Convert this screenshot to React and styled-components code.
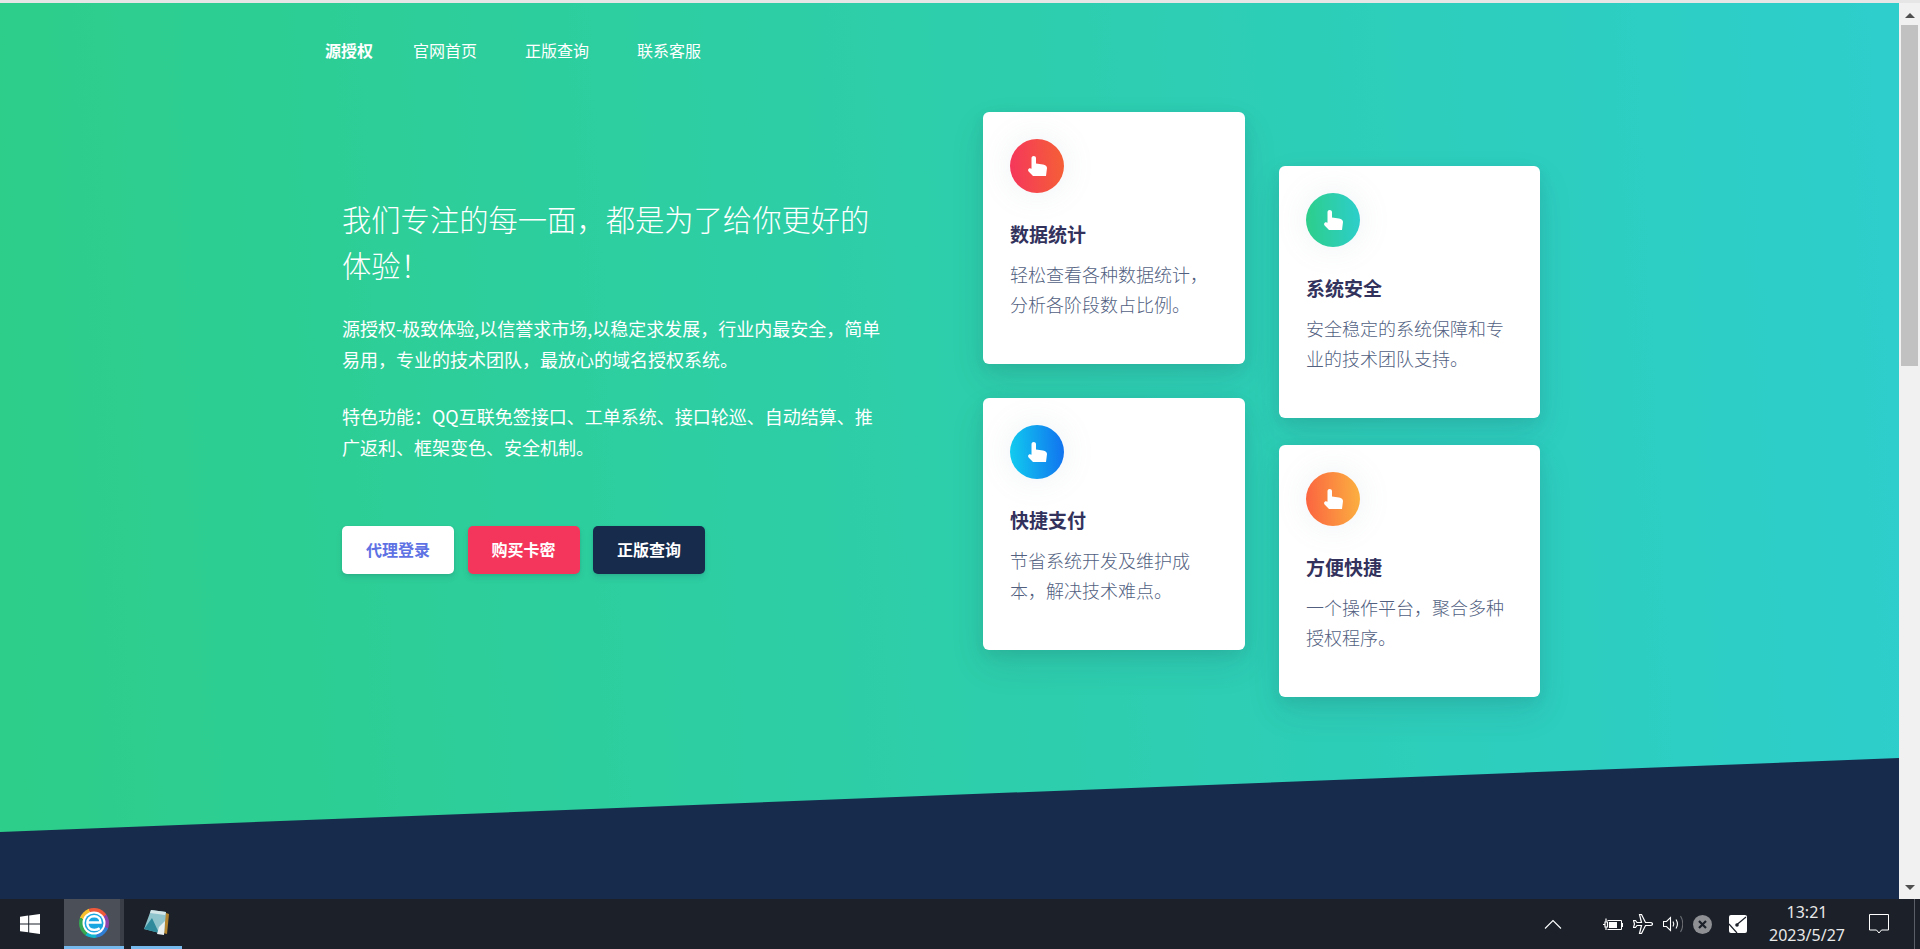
import styled, { createGlobalStyle } from "styled-components";

const GlobalStyle = createGlobalStyle`
  html, body {
    margin: 0;
    height: 100%;
    overflow: hidden;
  }
  body {
    font-family: "Noto Sans CJK SC", "Liberation Sans", sans-serif;
  }
`;

const Shell = styled.div`
  display: flex;
  flex-direction: column;
  height: 100vh;
  background: #e6e6e6;
`;

const TopStrip = styled.div`
  flex: 0 0 3px;
  background: #e6e6e6;
`;

const Window = styled.div`
  flex: 1;
  display: flex;
  min-height: 0;
`;

const Page = styled.main`
  position: relative;
  flex: 1;
  overflow: hidden;
  background: linear-gradient(87deg, #2dce89 0, #2dcecc 100%);
`;

const Slant = styled.div`
  position: absolute;
  left: 0;
  right: 0;
  bottom: 0;
  height: 141px;
  background: #172b4d;
  clip-path: polygon(0 74px, 100% 0, 100% 100%, 0 100%);
`;

const Nav = styled.nav`
  display: flex;
  align-items: center;
  box-sizing: border-box;
  height: 109px;
  padding: 0 0 16px 325px;
  color: #fff;
  font-size: 16px;
`;

const Brand = styled.span`
  font-weight: 700;
  margin-right: 16px;
`;

const NavLink = styled.a`
  padding: 0 24px;
  font-weight: 400;
`;

const Hero = styled.section`
  position: relative;
  display: flex;
  padding-left: 342px;
`;

const Intro = styled.div`
  width: 540px;
  margin-right: 101px;
  padding-top: 84px;
  color: #fff;
`;

const Heading = styled.h1`
  margin: 0 0 26px;
  font-size: 29.3px;
  line-height: 45.5px;
  font-weight: 300;
`;

const Lead = styled.p`
  margin: 0 0 26px;
  font-size: 18px;
  line-height: 31px;
  font-weight: 400;
`;

const Actions = styled.div`
  display: flex;
  gap: 13.5px;
  margin-top: 63px;
`;

const Action = styled.a`
  display: flex;
  align-items: center;
  justify-content: center;
  box-sizing: border-box;
  width: 112px;
  height: 48px;
  padding-bottom: 3px;
  border-radius: 5px;
  font-size: 16px;
  font-weight: 700;
  color: ${(p) => p.$color};
  background: ${(p) => p.$bg};
  box-shadow: 0 4px 6px rgba(50, 50, 93, 0.11), 0 1px 3px rgba(0, 0, 0, 0.08);
`;

const CardColumn = styled.div`
  display: flex;
  flex-direction: column;
  width: ${(p) => p.$width}px;
  margin-top: ${(p) => p.$top}px;
  margin-right: 34px;
  gap: ${(p) => p.$gap}px;
`;

const Card = styled.article`
  box-sizing: border-box;
  height: 252px;
  padding: 27px;
  background: #fff;
  border-radius: 6px;
  box-shadow: 0 15px 35px rgba(50, 50, 93, 0.1), 0 5px 15px rgba(0, 0, 0, 0.07);
`;

const IconShape = styled.div`
  display: flex;
  align-items: center;
  justify-content: center;
  width: 54px;
  height: 54px;
  border-radius: 50%;
  background: linear-gradient(87deg, ${(p) => p.$from} 0, ${(p) => p.$to} 100%);
  box-shadow: 0 0 32px rgba(136, 152, 170, 0.15);
`;

const CardTitle = styled.h3`
  margin: 27px 0 11px;
  font-size: 19px;
  line-height: 28px;
  font-weight: 700;
  color: #32325d;
`;

const CardText = styled.p`
  margin: 0;
  font-size: 18px;
  line-height: 30px;
  font-weight: 300;
  color: #525f7f;
`;

const Scrollbar = styled.div`
  flex: 0 0 21px;
  display: flex;
  flex-direction: column;
  align-items: center;
  background: #f1f1f1;
`;

const ScrollArrow = styled.div`
  flex: 0 0 ${(p) => (p.$down ? "auto" : "22px")};
  margin-top: ${(p) => (p.$down ? "auto" : "0")};
  margin-bottom: ${(p) => (p.$down ? "9px" : "0")};
  padding-top: ${(p) => (p.$down ? "0" : "10px")};
  box-sizing: border-box;
  &::before {
    content: "";
    display: block;
    width: 0;
    height: 0;
    border-left: 5px solid transparent;
    border-right: 5px solid transparent;
    ${(p) => (p.$down ? "border-top" : "border-bottom")}: 5px solid #505050;
  }
`;

const ScrollThumb = styled.div`
  width: 17px;
  height: 341px;
  background: #c1c1c1;
`;

const Taskbar = styled.footer`
  flex: 0 0 50px;
  display: flex;
  align-items: stretch;
  background: #1b2029;
  color: #fff;
`;

const StartButton = styled.div`
  flex: 0 0 60px;
  padding-right: 4px;
  display: flex;
  align-items: center;
  justify-content: center;
`;

const AppTile = styled.div`
  flex: 0 0 ${(p) => p.$width}px;
  margin-right: ${(p) => p.$gap}px;
  display: flex;
  align-items: center;
  justify-content: center;
  box-sizing: border-box;
  border-bottom: 3px solid #76b9ed;
  background: ${(p) => (p.$active ? "linear-gradient(90deg, #4b4f58 0 56px, #3a3e46 56px)" : "transparent")};
`;

const BrowserLogo = styled.div`
  position: relative;
  width: 30px;
  height: 30px;
  border-radius: 50%;
  background: conic-gradient(#ef5a3c 0 55deg, #8e44ad 55deg 110deg, #2f7fd6 110deg 170deg, #12b5cb 170deg 215deg, #34a853 215deg 290deg, #f9c02e 290deg 340deg, #ef5a3c 340deg);
`;

const TrayArea = styled.div`
  margin-left: auto;
  display: flex;
  align-items: center;
`;

const TrayCell = styled.div`
  flex: 0 0 ${(p) => p.$width}px;
  margin-right: ${(p) => p.$gap || 0}px;
  display: flex;
  justify-content: center;
  align-items: center;
`;

const Clock = styled.div`
  text-align: center;
  font-family: "Noto Sans", "Liberation Sans", sans-serif;
  font-size: 16px;
  line-height: 23px;
  color: #e8e8e8;
`;

const DesktopPeek = styled.div`
  flex: 0 0 21px;
  box-sizing: border-box;
  display: flex;
  justify-content: flex-end;
  padding-right: 5px;
  &::after {
    content: "";
    width: 1px;
    background: #5a5e66;
  }
`;

const leftCards = [
  { title: "数据统计", text: "轻松查看各种数据统计，分析各阶段数占比例。", from: "#f5365c", to: "#f56036" },
  { title: "快捷支付", text: "节省系统开发及维护成本，解决技术难点。", from: "#11cdef", to: "#1171ef" },
];

const rightCards = [
  { title: "系统安全", text: "安全稳定的系统保障和专业的技术团队支持。", from: "#2dce89", to: "#2dcecc" },
  { title: "方便快捷", text: "一个操作平台，聚合多种授权程序。", from: "#fb6340", to: "#fbb140" },
];

const HandIcon = () => (
  <svg width="19" height="20" viewBox="0 0 19 20" fill="#fff">
    <path d="M3.500 2.200C3.500.9 4.500 0 5.700 0S8 .9 8 2.200V7.500l7 1c2.500.4 4 1.500 4 3.500l-1 8H5L.6 15.500c-.9-1-.6-2.500.4-3 .8-.5 1.800-.3 2.500.3z" />
  </svg>
);

const FeatureCard = ({ item }) => (
  <Card>
    <IconShape $from={item.from} $to={item.to}>
      <HandIcon />
    </IconShape>
    <CardTitle>{item.title}</CardTitle>
    <CardText>{item.text}</CardText>
  </Card>
);

const WindowsIcon = () => (
  <svg width="20" height="20" viewBox="0 0 20 20" fill="#fff">
    <polygon points="0,2.8 8.2,1.6 8.2,9.4 0,9.4" />
    <polygon points="9.2,1.4 20,0 20,9.4 9.2,9.4" />
    <polygon points="0,10.4 8.2,10.4 8.2,18.2 0,17.2" />
    <polygon points="9.2,10.4 20,10.4 20,20 9.2,18.6" />
  </svg>
);

const BrowserIcon = () => (
  <BrowserLogo>
    <svg width="30" height="30" viewBox="0 0 30 30" fill="none">
      <circle cx="15" cy="15" r="11.5" fill="#fff" />
      <circle cx="15" cy="15" r="9.5" fill="#1aa6e0" />
      <path d="M8.500 14.500h13c0-4-2.600-6.300-6.300-6.300-4 0-6.900 2.800-6.900 6.900s2.900 6.800 7 6.800c2.200 0 4-.6 5.400-1.700" stroke="#fff" strokeWidth="2.4" />
    </svg>
  </BrowserLogo>
);

const NotepadIcon = () => (
  <svg width="28" height="28" viewBox="0 0 28 28">
    <polygon points="20,3 26,5 24,25 20,24" fill="#b5842f" />
    <polygon points="8,1 23,3 21,25 1,20" fill="#8fc4cc" />
    <polygon points="8,1 23,3 22,6 7,4" fill="#d5e6e8" />
    <polygon points="1,20 9,9 16,24" fill="#2f8b9c" />
    <polygon points="16,18 22,12 21,26 14,25" fill="#e8f0f2" />
  </svg>
);

const Chevron = () => (
  <svg width="18" height="10" viewBox="0 0 18 10" fill="none" stroke="#fff" strokeWidth="1.1">
    <path d="M1 9.500 9 1.500l8 8" />
  </svg>
);

const BatteryIcon = () => (
  <svg width="20" height="14" viewBox="0 0 20 14" fill="none" stroke="#fff">
    <path d="M4.500 3.500H18.500V12.500H4.500" />
    <rect x="6" y="5" width="8" height="6" fill="#fff" stroke="none" />
    <rect x="19" y="6" width="1" height="4" fill="#fff" stroke="none" />
    <path d="M0 7.500h2M2 5h2.500v5H2zM3 1.500V5M3 10v3" strokeWidth="1.2" />
  </svg>
);

const PlaneIcon = () => (
  <svg width="20" height="20" viewBox="0 0 20 20" fill="none" stroke="#fff" strokeWidth="1.2">
    <path d="M19.500 10c0 .9-1 1.500-2.500 1.500h-4.500L8.500 19.500H6.500l2-8H4l-1.500 2H.5l1-3.500-1-3.500h2L4 8.500h4.500l-2-8h2l4 8H17c1.500 0 2.500.6 2.500 1.500z" />
  </svg>
);

const SpeakerIcon = () => (
  <svg width="20" height="18" viewBox="0 0 20 18" fill="none" stroke="#fff" strokeWidth="1.1">
    <path d="M.5 6.500h3l4-4v13l-4-4h-3z" />
    <path d="M10 6.500c1 1.500 1 3.500 0 5" />
    <path d="M13 4.500c1.800 2.800 1.800 6.200 0 9" />
    <path d="M17.500 1c3 4.500 3 11.500 0 16" stroke="#6a6d73" />
  </svg>
);

const ErrorIcon = () => (
  <svg width="19" height="19" viewBox="0 0 19 19">
    <circle cx="9.500" cy="9.500" r="9.500" fill="#8e9094" />
    <path d="M6 6l7 7M13 6l-7 7" stroke="#1b2029" strokeWidth="2.2" />
  </svg>
);

const InputIcon = () => (
  <svg width="18" height="18" viewBox="0 0 18 18">
    <rect width="18" height="18" rx="2" fill="#fff" />
    <path d="M17 2 8 9.500" stroke="#1b2029" strokeWidth="1.2" />
    <circle cx="8" cy="10" r="1.800" fill="#1b2029" />
    <path d="M0 9l8 9" stroke="#1b2029" strokeWidth="1.2" />
  </svg>
);

const ChatIcon = () => (
  <svg width="20" height="20" viewBox="0 0 20 20" fill="none" stroke="#fff">
    <path d="M.5.500h19v15.500h-7l-2.500 3-2.500-3h-7z" />
  </svg>
);

const App = () => (
  <Shell>
    <GlobalStyle />
    <TopStrip />
    <Window>
      <Page>
        <Slant />
        <Nav>
          <Brand>源授权</Brand>
          <NavLink>官网首页</NavLink>
          <NavLink>正版查询</NavLink>
          <NavLink>联系客服</NavLink>
        </Nav>
        <Hero>
          <Intro>
            <Heading>我们专注的每一面，都是为了给你更好的体验！</Heading>
            <Lead>源授权-极致体验,以信誉求市场,以稳定求发展，行业内最安全，简单易用，专业的技术团队，最放心的域名授权系统。</Lead>
            <Lead>特色功能：QQ互联免签接口、工单系统、接口轮巡、自动结算、推广返利、框架变色、安全机制。</Lead>
            <Actions>
              <Action $bg="#fff" $color="#5e72e4">代理登录</Action>
              <Action $bg="#f5365c" $color="#fff">购买卡密</Action>
              <Action $bg="#172b4d" $color="#fff">正版查询</Action>
            </Actions>
          </Intro>
          <CardColumn $width={262} $top={0} $gap={34}>
            {leftCards.map((item) => (
              <FeatureCard key={item.title} item={item} />
            ))}
          </CardColumn>
          <CardColumn $width={261} $top={54} $gap={27}>
            {rightCards.map((item) => (
              <FeatureCard key={item.title} item={item} />
            ))}
          </CardColumn>
        </Hero>
      </Page>
      <Scrollbar>
        <ScrollArrow />
        <ScrollThumb />
        <ScrollArrow $down />
      </Scrollbar>
    </Window>
    <Taskbar>
      <StartButton>
        <WindowsIcon />
      </StartButton>
      <AppTile $width={60} $gap={7} $active>
        <BrowserIcon />
      </AppTile>
      <AppTile $width={51} $gap={0}>
        <NotepadIcon />
      </AppTile>
      <TrayArea>
        <TrayCell $width={40} $gap={25}>
          <Chevron />
        </TrayCell>
        <TrayCell $width={30}>
          <BatteryIcon />
        </TrayCell>
        <TrayCell $width={30}>
          <PlaneIcon />
        </TrayCell>
        <TrayCell $width={30}>
          <SpeakerIcon />
        </TrayCell>
        <TrayCell $width={28} $gap={7}>
          <ErrorIcon />
        </TrayCell>
        <TrayCell $width={30} $gap={10}>
          <InputIcon />
        </TrayCell>
        <TrayCell $width={88} $gap={8}>
          <Clock>
            13:21
            <br />
            2023/5/27
          </Clock>
        </TrayCell>
        <TrayCell $width={40}>
          <ChatIcon />
        </TrayCell>
      </TrayArea>
      <DesktopPeek />
    </Taskbar>
  </Shell>
);

export default App;
